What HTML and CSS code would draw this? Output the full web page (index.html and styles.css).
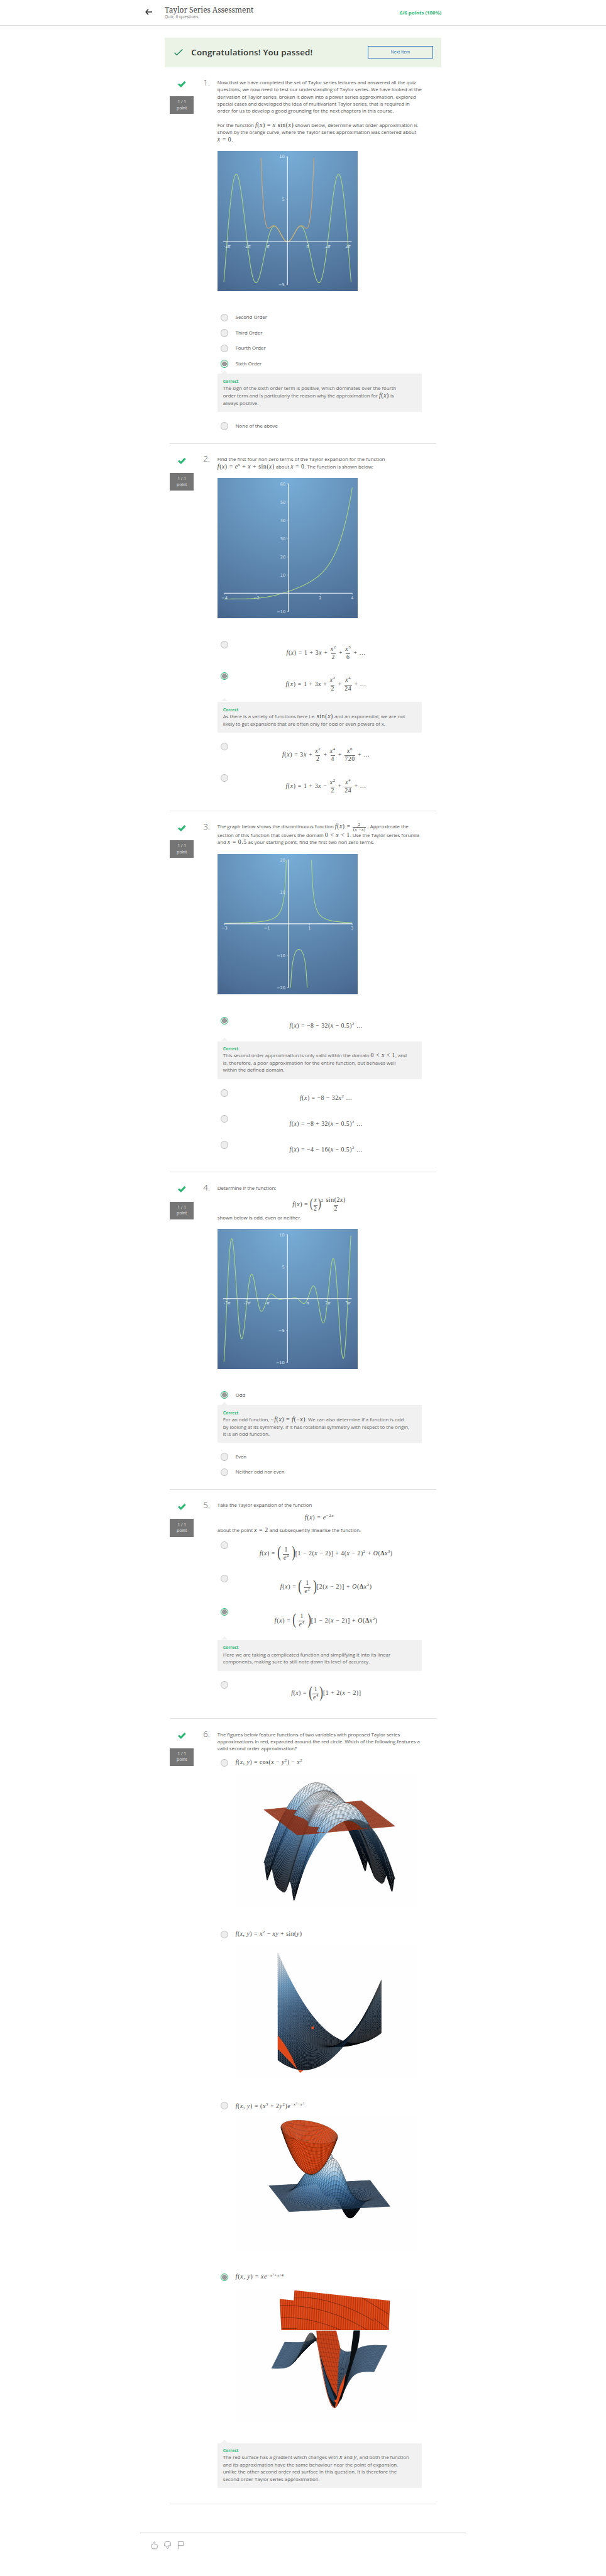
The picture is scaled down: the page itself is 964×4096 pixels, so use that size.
FILE: index.html
```html
<!DOCTYPE html>
<html lang="en">
<head>
<meta charset="utf-8">
<title>Taylor Series Assessment</title>
<link rel="stylesheet" href="styles.css">
</head>
<body>
<svg class="sprite" aria-hidden="true">
  <symbol id="tick" viewBox="0 0 23 18"><path d="M0 9.8 3.6 6.2 8.6 10.4 18.6 0 23 3.4 8.8 18Z"/></symbol>
</svg>

<header class="topbar">
  <div class="topbar__inner">
    <svg class="back" viewBox="0 0 20 18"><path d="M9 1 2 9l7 8M2 9h18"/></svg>
    <div class="topbar__titles">
      <h1>Taylor Series Assessment</h1>
      <p>Quiz, 6 questions</p>
    </div>
    <div class="topbar__score">6/6 points (100%)</div>
  </div>
</header>

<main class="page">
  <section class="banner">
    <svg class="banner__tick" viewBox="0 0 25 18"><path d="M1 10.5 7.5 17 24 .8"/></svg>
    <h2>Congratulations! You passed!</h2>
    <a class="banner__btn">Next Item</a>
  </section>

  <section class="question question--1">
    <div class="side"><svg class="side__tick"><use href="#tick"/></svg><div class="badge">1 / 1<br>point</div></div>
    <div class="num">1.</div>
    <div class="body">
      <div class="prompt">
        <p>Now that we have completed the set of Taylor series lectures and answered all the quiz<br>questions, we now need to test our understanding of Taylor series. We have looked at the<br>derivation of Taylor series, broken it down into a power series approximation, explored<br>special cases and developed the idea of multivariant Taylor series, that is required in<br>order for us to develop a good grounding for the next chapters in this course.</p>
        <p><span class="line line--math">For the function <span class="m"><i>f</i>(<i>x</i>) = <i>x</i> sin(<i>x</i>)</span> shown below, determine what order approximation is</span><span class="line line--math">shown by the orange curve, where the Taylor series approximation was centered about</span><span class="line"><span class="m"><i>x</i> = 0</span>.</span></p>
      </div>
      <svg class="graph" id="graph1" viewBox="0 0 400 400"></svg>
      <div class="options">
        <div class="option"><span class="radio"></span><span class="label">Second Order</span></div>
        <div class="option"><span class="radio"></span><span class="label">Third Order</span></div>
        <div class="option"><span class="radio"></span><span class="label">Fourth Order</span></div>
        <div class="option"><span class="radio radio--on"></span><span class="label">Sixth Order</span></div>
        <div class="feedback"><b>Correct</b><span class="line line--math">The sign of the sixth order term is positive, which dominates over the fourth</span><span class="line line--math">order term and is particularly the reason why the approximation for <span class="m"><i>f</i>(<i>x</i>)</span> is</span><span class="line">always positive.</span></div>
        <div class="option"><span class="radio"></span><span class="label">None of the above</span></div>
      </div>
    </div>
  </section>

  <section class="question question--2">
    <div class="side"><svg class="side__tick"><use href="#tick"/></svg><div class="badge">1 / 1<br>point</div></div>
    <div class="num">2.</div>
    <div class="body">
      <div class="prompt">
        <p><span class="line line--math">Find the first four non zero terms of the Taylor expansion for the function</span><span class="line"><span class="m"><i>f</i>(<i>x</i>) = <i>e</i><sup><i>x</i></sup> + <i>x</i> + sin(<i>x</i>)</span> about <span class="m"><i>x</i> = 0</span>. The function is shown below:</span></p>
      </div>
      <svg class="graph" id="graph2" viewBox="0 0 400 400"></svg>
      <div class="options options--frac">
        <div class="option"><span class="radio"></span><div class="formula"><span class="m"><i>f</i>(<i>x</i>) = 1 + 3<i>x</i> + <span class="frac"><span><i>x</i><sup>2</sup></span><span>2</span></span> + <span class="frac"><span><i>x</i><sup>3</sup></span><span>6</span></span> + …</span></div></div>
        <div class="option"><span class="radio radio--on"></span><div class="formula"><span class="m"><i>f</i>(<i>x</i>) = 1 + 3<i>x</i> + <span class="frac"><span><i>x</i><sup>2</sup></span><span>2</span></span> + <span class="frac"><span><i>x</i><sup>4</sup></span><span>24</span></span> + …</span></div></div>
        <div class="feedback"><b>Correct</b><span class="line line--math">As there is a variety of functions here i.e. <span class="m">sin(<i>x</i>)</span> and an exponential, we are not</span><span class="line">likely to get expansions that are often only for odd or even powers of x.</span></div>
        <div class="option"><span class="radio"></span><div class="formula"><span class="m"><i>f</i>(<i>x</i>) = 3<i>x</i> + <span class="frac"><span><i>x</i><sup>2</sup></span><span>2</span></span> + <span class="frac"><span><i>x</i><sup>4</sup></span><span>4</span></span> + <span class="frac"><span><i>x</i><sup>6</sup></span><span>720</span></span> + …</span></div></div>
        <div class="option"><span class="radio"></span><div class="formula"><span class="m"><i>f</i>(<i>x</i>) = 1 + 3<i>x</i> − <span class="frac"><span><i>x</i><sup>2</sup></span><span>2</span></span> + <span class="frac"><span><i>x</i><sup>4</sup></span><span>24</span></span> + …</span></div></div>
      </div>
    </div>
  </section>

  <section class="question question--3">
    <div class="side"><svg class="side__tick"><use href="#tick"/></svg><div class="badge">1 / 1<br>point</div></div>
    <div class="num">3.</div>
    <div class="body">
      <div class="prompt">
        <p><span class="line line--tall">The graph below shows the discontinuous function <span class="m"><i>f</i>(<i>x</i>) = <span class="frac frac--small"><span>2</span><span>(<i>x</i><sup>2</sup>−<i>x</i>)</span></span></span> . Approximate the</span><span class="line line--math">section of this function that covers the domain <span class="m">0 &lt; <i>x</i> &lt; 1</span>. Use the Taylor series forumla</span><span class="line">and <span class="m"><i>x</i> = 0.5</span> as your starting point, find the first two non zero terms.</span></p>
      </div>
      <svg class="graph" id="graph3" viewBox="0 0 400 400"></svg>
      <div class="options options--line">
        <div class="option"><span class="radio radio--on"></span><div class="formula"><span class="m"><i>f</i>(<i>x</i>) = −8 − 32(<i>x</i> − 0.5)<sup>2</sup> …</span></div></div>
        <div class="feedback"><b>Correct</b><span class="line line--math">This second order approximation is only valid within the domain <span class="m">0 &lt; <i>x</i> &lt; 1</span>, and</span><span class="line">is, therefore, a poor approximation for the entire function, but behaves well</span><span class="line">within the defined domain.</span></div>
        <div class="option"><span class="radio"></span><div class="formula"><span class="m"><i>f</i>(<i>x</i>) = −8 − 32<i>x</i><sup>2</sup> …</span></div></div>
        <div class="option"><span class="radio"></span><div class="formula"><span class="m"><i>f</i>(<i>x</i>) = −8 + 32(<i>x</i> − 0.5)<sup>2</sup> …</span></div></div>
        <div class="option"><span class="radio"></span><div class="formula"><span class="m"><i>f</i>(<i>x</i>) = −4 − 16(<i>x</i> − 0.5)<sup>2</sup> …</span></div></div>
      </div>
    </div>
  </section>

  <section class="question question--4">
    <div class="side"><svg class="side__tick"><use href="#tick"/></svg><div class="badge">1 / 1<br>point</div></div>
    <div class="num">4.</div>
    <div class="body">
      <div class="prompt">
        <p>Determine if the function:</p>
        <div class="display display--tall"><span class="m"><i>f</i>(<i>x</i>) = <span class="paren">(</span><span class="frac"><span><i>x</i></span><span>2</span></span><span class="paren">)</span><sup class="high">2</sup> <span class="frac"><span>sin(2<i>x</i>)</span><span>2</span></span></span></div>
        <p>shown below is odd, even or neither.</p>
      </div>
      <svg class="graph" id="graph4" viewBox="0 0 400 400"></svg>
      <div class="options">
        <div class="option"><span class="radio radio--on"></span><span class="label">Odd</span></div>
        <div class="feedback"><b>Correct</b><span class="line line--math">For an odd function, <span class="m">−<i>f</i>(<i>x</i>) = <i>f</i>(−<i>x</i>)</span>. We can also determine if a function is odd</span><span class="line">by looking at its symmetry. If it has rotational symmetry with respect to the origin,</span><span class="line">it is an odd function.</span></div>
        <div class="option"><span class="radio"></span><span class="label">Even</span></div>
        <div class="option"><span class="radio"></span><span class="label">Neither odd nor even</span></div>
      </div>
    </div>
  </section>

  <section class="question question--5">
    <div class="side"><svg class="side__tick"><use href="#tick"/></svg><div class="badge">1 / 1<br>point</div></div>
    <div class="num">5.</div>
    <div class="body">
      <div class="prompt">
        <p>Take the Taylor expansion of the function</p>
        <div class="display"><span class="m m--wide"><i>f</i>(<i>x</i>) = <i>e</i><sup>−2<i>x</i></sup></span></div>
        <p>about the point <span class="m"><i>x</i> = 2</span> and subsequently linearise the function.</p>
      </div>
      <div class="options options--big">
        <div class="option"><span class="radio"></span><div class="formula"><span class="m"><i>f</i>(<i>x</i>) = <span class="paren paren--l">(</span> <span class="frac"><span>1</span><span><i>e</i><sup>4</sup></span></span> <span class="paren paren--l">)</span>[1 − 2(<i>x</i> − 2)] + 4(<i>x</i> − 2)<sup>2</sup> + <i>O</i>(<b>Δ</b><i>x</i><sup>3</sup>)</span></div></div>
        <div class="option"><span class="radio"></span><div class="formula"><span class="m m--roomy"><i>f</i>(<i>x</i>) = <span class="paren paren--l">(</span> <span class="frac"><span>1</span><span><i>e</i><sup>2</sup></span></span> <span class="paren paren--l">)</span>[2(<i>x</i> − 2)] + <i>O</i>(<b>Δ</b><i>x</i><sup>2</sup>)</span></div></div>
        <div class="option"><span class="radio radio--on"></span><div class="formula"><span class="m m--roomy"><i>f</i>(<i>x</i>) = <span class="paren paren--l">(</span> <span class="frac"><span>1</span><span><i>e</i><sup>4</sup></span></span> <span class="paren paren--l">)</span>[1 − 2(<i>x</i> − 2)] + <i>O</i>(<b>Δ</b><i>x</i><sup>2</sup>)</span></div></div>
        <div class="feedback"><b>Correct</b><span class="line line--math">Here we are taking a complicated function and simplifying it into its linear</span><span class="line">components, making sure to still note down its level of accuracy.</span></div>
        <div class="option"><span class="radio"></span><div class="formula"><span class="m"><i>f</i>(<i>x</i>) = <span class="paren paren--l">(</span><span class="frac"><span>1</span><span><i>e</i><sup>4</sup></span></span><span class="paren paren--l">)</span>[1 + 2(<i>x</i> − 2)]</span></div></div>
      </div>
    </div>
  </section>

  <section class="question question--6">
    <div class="side"><svg class="side__tick"><use href="#tick"/></svg><div class="badge">1 / 1<br>point</div></div>
    <div class="num">6.</div>
    <div class="body">
      <div class="prompt">
        <p>The figures below feature functions of two variables with proposed Taylor series<br>approximations in red, expanded around the red circle. Which of the following features a<br>valid second order approximation?</p>
      </div>
      <div class="options options--fig">
        <div class="option"><span class="radio"></span><div class="pick"><div class="formula"><span class="m"><i>f</i>(<i>x</i>, <i>y</i>) = cos(<i>x</i> − <i>y</i><sup>2</sup>) − <i>x</i><sup>2</sup></span></div><svg class="figure" id="fig1" viewBox="0 0 518 380"></svg></div></div>
        <div class="option"><span class="radio"></span><div class="pick"><div class="formula"><span class="m"><i>f</i>(<i>x</i>, <i>y</i>) = <i>x</i><sup>2</sup> − <i>xy</i> + sin(<i>y</i>)</span></div><svg class="figure" id="fig2" viewBox="0 0 518 380"></svg></div></div>
        <div class="option"><span class="radio"></span><div class="pick"><div class="formula formula--low"><span class="m m--third"><i>f</i>(<i>x</i>, <i>y</i>) = (<i>x</i><sup>3</sup> + 2<i>y</i><sup>2</sup>)<i>e</i><sup>−<i>x</i><sup>2</sup>−<i>y</i><sup>2</sup></sup></span></div><svg class="figure" id="fig3" viewBox="0 0 518 380"></svg></div></div>
        <div class="option"><span class="radio radio--on"></span><div class="pick"><div class="formula"><span class="m m--wide"><i>f</i>(<i>x</i>, <i>y</i>) = <i>xe</i><sup>−<i>x</i><sup>2</sup>+<i>y</i>/4</sup></span></div><svg class="figure" id="fig4" viewBox="0 0 518 380"></svg></div></div>
        <div class="feedback"><b>Correct</b><span class="line line--math">The red surface has a gradient which changes with <span class="m"><i>x</i></span> and <span class="m"><i>y</i></span>, and both the function</span><span class="line">and its approximation have the same behaviour near the point of expansion,</span><span class="line">unlike the other second order red surface in this question. It is therefore the</span><span class="line">second order Taylor series approximation.</span></div>
      </div>
    </div>
  </section>
</main>

<footer class="footer">
  <svg viewBox="0 0 20 22"><path d="M1 9.5h3.500L10 1.200l2 1.300-1 7h7l1.300 2-1.500 8-1.800 1.700H5l-3-3Z"/></svg>
  <svg viewBox="0 0 20 22"><path d="M1 12.500h3.500L10 20.800l2-1.300-1-7h7l1.300-2-1.500-8L16 .8H5l-3 3Z"/></svg>
  <svg viewBox="0 0 20 22"><path d="M2.500 22V1h15v11h-15"/></svg>
</footer>
<script src="plots.js"></script>
</body>
</html>
```
FILE: styles.css
```css
/* 1rem is ten layout units */
html { font-size: 5.5722px; }
* { box-sizing: border-box; margin: 0; padding: 0; }
body { background: #fff; color: #525252; font-family: "Open Sans", "Noto Sans", sans-serif; font-size: 1.4rem; line-height: 2rem; height: 735rem; overflow-x: hidden; }
.sprite { display: none; }

.topbar { height: 7.4rem; border-bottom: .2rem solid #ddd; }
.topbar__inner { width: 93rem; margin: 0 auto; padding: 0 7rem 0 1.4rem; display: flex; align-items: flex-start; }
.back { width: 2rem; height: 1.8rem; margin-top: 2.6rem; fill: none; stroke: #333; stroke-width: 2.6; }
.topbar__titles { margin-left: 3.6rem; flex: 1; }
.topbar h1 { width: max-content; font: 400 2.15rem/2.8rem "Noto Serif", "Liberation Serif", serif; margin-top: 1.35rem; color: #444; letter-spacing: -.012rem; }
.topbar p { width: max-content; font-size: 1.2rem; line-height: 1.8rem; margin-top: -.2rem; color: #757575; }
.topbar__score { margin-top: 2.7rem; font-weight: 700; color: #2ab673; }

.page { width: 79rem; margin: 0 auto; }
.banner { margin-top: 3.4rem; height: 8.37rem; background: #eaf3e6; display: flex; align-items: center; padding: 0 2.4rem 0 2.7rem; }
.banner__tick { width: 2.5rem; height: 1.8rem; fill: none; stroke: #1f8a5b; stroke-width: 2.5; }
.banner h2 { margin-left: 2.4rem; font-size: 2.4rem; line-height: 3rem; font-weight: 600; color: #333; letter-spacing: .038rem; }
.banner__btn { margin-left: auto; width: 18.6rem; height: 3.6rem; border: .18rem solid #2a6cc0; color: #2a6cc0; font-size: 1.2rem; line-height: 3.3rem; text-align: center; }

.question { width: 76rem; margin: 0 auto; border-bottom: .2rem solid #e0e0e0; display: grid; grid-template-columns: 9.5rem 4.07rem 1fr; }
.question--1 { height: 107.46rem; }
.question--2 { height: 104.83rem; }
.question--3 { height: 103.14rem; }
.question--4 { height: 90.55rem; }
.question--5 { height: 65.38rem; }
.question--6 { height: 224.1rem; }
.side { width: 6.8rem; padding-top: 3.95rem; }
.side__tick { display: block; width: 2.3rem; height: 1.8rem; margin: 0 auto 2.6rem; fill: #2ab673; }
.badge { height: 5.05rem; padding-top: .74rem; background: #757575; color: #e8e8e8; font-size: 1.2rem; line-height: 1.7rem; text-align: center; }
.num { padding-top: 3.2rem; font-size: 2.4rem; line-height: 2.4rem; font-weight: 300; }
.body { padding-top: 3.5rem; white-space: nowrap; }
.prompt p + p { margin-top: 2.07rem; }
.question--1 .prompt { height: 20.48rem; }
.question--2 .prompt { height: 6.3rem; }
.question--3 .prompt { height: 8.84rem; }
.question--4 .prompt { height: 12.53rem; }
.question--5 .prompt { height: 10.07rem; }
.question--6 .prompt { height: 6.83rem; }
.line { display: block; height: 2rem; line-height: 2rem; }
.line--math { height: 2.12rem; }
.line--tall { height: 2.4rem; }

.graph { display: block; width: 40rem; height: 40rem; margin-bottom: 5.3rem; background: radial-gradient(circle at 50% 0, #78aed8 0%, #6490b8 45%, #4e7098 89%, #46638b 100%); }
.graph text { font: 12px "DejaVu Sans", sans-serif; fill: #dbe6f0; }
.graph tspan { font-style: italic; }
.axis { stroke: #f4f8fb; stroke-width: 2; fill: none; }
.tickmark { stroke: #f4f8fb; stroke-width: 1; fill: none; }
.curve { stroke: #a9d67f; stroke-width: 1.9; fill: none; }
.curve--orange { stroke: #d8a86c; }

.option { display: flex; align-items: flex-start; height: 4.4rem; }
.options--frac .option { height: 8.97rem; }
.options--line .option { height: 7.4rem; }
.options--big .option { height: 9.56rem; }
.options--fig .option { height: 48.92rem; }
.radio { flex: none; width: 2.2rem; height: 2.2rem; margin: 1.1rem 2.05rem 0 .94rem; border: .15rem solid #bdbdbd; border-radius: 50%; background: #eee; }
.radio--on { border: .2rem solid #2ab673; background: radial-gradient(circle closest-side, #999 0 74%, #eee 80%); }
.label { padding-top: 1.15rem; }
.formula { width: 51.7rem; height: 2rem; margin-top: 3.67rem; text-align: center; }
.options--line .formula { margin-top: 2.67rem; }
.options--fig .formula { margin-top: 1.2rem; text-align: left; }
.options--fig .formula--low { margin-top: 1.4rem; margin-bottom: -.2rem; }
.feedback { position: relative; width: 58.4rem; margin: .63rem 0 1.82rem; padding: 1.17rem 1.6rem 1.46rem; background: #f1f1f1; color: #666; }
.feedback::before { content: ""; position: absolute; left: 1.1rem; top: -1rem; border: .97rem solid transparent; border-top: 0; border-bottom: 1rem solid #f1f1f1; }
.feedback b { display: block; font-size: 1.2rem; color: #2ab673; font-weight: 700; height: 2.03rem; }

.m { font-family: "Liberation Serif", serif; font-size: 1.75rem; line-height: 0; letter-spacing: .1rem; color: #444; }
.options--frac .m { letter-spacing: .115rem; }
.options--line .m { letter-spacing: .09rem; }
.options--fig .m { letter-spacing: .09rem; }
.options--fig .m--third { letter-spacing: .11rem; }
.m.m--wide { letter-spacing: .128rem; }
.m.m--roomy { letter-spacing: .12rem; }
.m b { display: inline; height: auto; font-size: inherit; color: inherit; }
.m sup { font-size: 70%; line-height: 0; vertical-align: .65rem; }
.m sup sup { vertical-align: .4rem; }
.m sup.high { vertical-align: 1.3rem; }
.frac { display: inline-flex; flex-direction: column; align-items: center; vertical-align: middle; margin: -3rem .1rem; line-height: 1.8rem; }
.frac > span { display: block; height: 2.2rem; padding: 0 .1rem; }
.frac > span + span { border-top: .12rem solid #666; }
.frac--small { font-size: 1.2rem; line-height: 1.2rem; }
.frac--small > span { height: 1.3rem; }
.paren { display: inline-block; font-size: 3.6rem; line-height: 0; vertical-align: -.45rem; transform: scaleX(.7); margin: 0 -.15rem; letter-spacing: 0; }
.paren--l { font-size: 4.4rem; vertical-align: -.62rem; margin: 0 -.2rem; }
.display { height: 2rem; margin-top: 1.5rem; text-align: center; width: 58.2rem; }
.display + p { margin-top: 1.6rem; }
.display--tall { margin-top: 2.45rem; }
.display--tall + p { margin-top: 2.06rem; }

.figure { display: block; width: 51.8rem; height: 38rem; margin-top: 2.24rem; background: #fefefe; }

.footer { width: 93rem; height: 10rem; margin: 8.07rem auto 0; border-top: .18rem solid #cfcfcf; padding: 2.3rem 3.1rem; display: flex; gap: 1.8rem; }
.footer svg { width: 2rem; height: 2.2rem; fill: none; stroke: #7d7d85; stroke-width: 1.3; overflow: visible; }
```
FILE: plots.js
```js
const PI = Math.PI;
const get = id => document.getElementById(id);

/* ---------- line graphs ---------- */
function curve(g, fn, from, to, cls) {
  let d = '', pen = false;
  for (let i = 0; i <= 800; i++) {
    const x = from + (to - from) * i / 800, y = fn(x);
    if (!isFinite(y) || y > g.max || y < g.min) { pen = false; continue; }
    d += (pen ? 'L' : 'M') + (g.ox + x * g.sx).toFixed(2) + ' ' + (g.oy - y * g.sy).toFixed(2);
    pen = true;
  }
  return `<path class="curve ${cls || ''}" d="${d}"/>`;
}
function graph(id, g) {
  let s = g.curves.map(c => curve(g, c[0], c[1], c[2], c[3])).join('');
  s += `<path class="axis" d="M${g.left} ${g.oy}H${g.right}M${g.ox} 15.5V382"/>`;
  let ticks = '';
  g.yt.forEach(v => {
    const y = g.oy - v * g.sy;
    ticks += `M${g.ox - 3} ${y}H${g.ox}`;
    s += `<text x="${g.ox - 8}" y="${y + 4.5}" text-anchor="end">${String(v).replace('-', '−')}</text>`;
  });
  g.xt.forEach(([v, label]) => {
    const x = g.ox + v * g.sx;
    ticks += `M${x} ${g.oy}v4`;
    s += `<text x="${x}" y="${g.oy + 17}" text-anchor="middle">${label}</text>`;
  });
  get(id).innerHTML = s + `<path class="tickmark" d="${ticks}"/>`;
}
const pis = [-3, -2, -1, 1, 2, 3].map(k => [k * PI,
  (k < 0 ? '-' : '') + (Math.abs(k) > 1 ? Math.abs(k) : '') + '<tspan>π</tspan>']);
graph('graph1', { ox: 199.7, oy: 259, sx: 57.5 / PI, sy: 24.35, max: 10, min: -5.1, left: 15.8, right: 383,
  yt: [10, 5, -5], xt: pis, curves: [[x => x * Math.sin(x), -9.92, 9.92],
  [x => x * x - x ** 4 / 6 + x ** 6 / 120, -5, 5, 'curve--orange']] });
graph('graph2', { ox: 202.2, oy: 329, sx: 45.6, sy: 5.21, max: 60, min: -10, left: 19, right: 385,
  yt: [60, 50, 40, 30, 20, 10, -10], xt: [[-4, '−4'], [-2, '−2'], [2, '2'], [4, '4']],
  curves: [[x => Math.exp(x) + x + Math.sin(x), -4, 4]] });
const pole = x => 2 / (x * x - x);
graph('graph3', { ox: 202, oy: 199, sx: 60.8, sy: 9.12, max: 20, min: -20, left: 19, right: 385,
  yt: [20, 10, -10, -20], xt: [[-3, '−3'], [-1, '−1'], [1, '1'], [3, '3']],
  curves: [[pole, -3, -0.01], [pole, 0.01, 0.99], [pole, 1.01, 3]] });
graph('graph4', { ox: 199.7, oy: 199, sx: 57.5 / PI, sy: 18.2, max: 10, min: -10, left: 15.8, right: 383,
  yt: [10, 5, -5, -10], xt: pis, curves: [[x => x * x / 8 * Math.sin(2 * x), -9.92, 9.92]] });

/* ---------- surfaces ---------- */
const COT = 3.68, TAN = 0.272;
const STOPS = [[0, 5, 8, 12], [0.3, 34, 58, 84], [0.5, 61, 104, 148], [0.7, 112, 170, 216], [0.85, 200, 225, 243], [1, 255, 255, 255]];
function shade(t, k) {
  t = Math.max(0, Math.min(1, t));
  let i = 1;
  while (i < STOPS.length - 1 && STOPS[i][0] < t) i++;
  const a = STOPS[i - 1], b = STOPS[i], u = (t - a[0]) / (b[0] - a[0]);
  return 'rgb(' + [1, 2, 3].map(c => Math.round((a[c] + (b[c] - a[c]) * u) * k)).join() + ')';
}
/* v: view {cx, cy, X, Y, z, half, base}; the underside is painted darker */
function mesh(v, fn, n, paint) {
  const quads = [];
  const at = (i, j) => {
    const a = -1 + 2 * i / n, b = -1 + 2 * j / n, z = fn(a * v.half, b * v.half);
    const gy = a * v.X[1] + b * v.Y[1], h = (z - v.base) * v.z;
    return { x: v.cx + a * v.X[0] + b * v.Y[0], y: v.cy + gy - h, z, near: gy * COT + h * TAN };
  };
  const pts = [];
  for (let i = 0; i <= n; i++) { pts.push([]); for (let j = 0; j <= n; j++) pts[i].push(at(i, j)); }
  for (let i = 0; i < n; i++) for (let j = 0; j < n; j++) {
    const q = [pts[i][j], pts[i + 1][j], pts[i + 1][j + 1], pts[i][j + 1]];
    const area = (q[2].x - q[0].x) * (q[3].y - q[1].y) - (q[3].x - q[1].x) * (q[2].y - q[0].y);
    quads.push({ near: q.reduce((s, p) => s + p.near, 0) / 4,
      d: 'M' + q.map(p => p.x.toFixed(2) + ' ' + p.y.toFixed(2)).join('L') + 'Z',
      fill: paint(q.reduce((s, p) => s + p.z, 0) / 4, area > 0) });
  }
  return quads;
}
const draw = (quads, width, op) => `<g stroke="#000" stroke-opacity="${op}" stroke-width="${width}">` +
  quads.sort((a, b) => a.near - b.near).map(q => `<path fill="${q.fill}" d="${q.d}"/>`).join('') + '</g>';
const blue = (lo, hi) => (z, back) => shade((z - lo) / (hi - lo), back ? 0.4 : 1);

const v1 = { cx: 267.6, cy: 125, X: [-139.8, 12.7], Y: [48, 36.5], z: 22.4, half: PI, base: -2.2 };
get('fig1').innerHTML = draw(mesh(v1, (x, y) => Math.cos(x - y * y) - x * x, 70, blue(-10.9, 1))
  .concat(mesh(v1, () => -2.2, 70, () => '#d9451a')), 0.45, 0.5);

const v2 = { cx: 267.9, cy: 287.5, X: [-147.8, 0], Y: [0, 38.5], z: 11.6, half: PI, base: 0 };
get('fig2').innerHTML = draw(mesh(v2, (x, y) => x * x - x * y + Math.sin(y), 60, blue(-4, 20)), 0.5, 0.5) +
  `<g transform="translate(-213 248.8) scale(.5102 .7015)" fill="#e04a1a"><path d="M653 10 690 45 730 95 762 148 700 100 653 65ZM765 150 778 162 796 152Z"/></g>
  <circle cx="219.7" cy="234" r="4" fill="#e8501c"/>`;

const v3 = { cx: 267.6, cy: 225.8, X: [-144.6, 7.7], Y: [28.8, 37.5], z: 162, half: 3, base: 0 };
const bowl = [];
const B = 34, bowlAt = (u, w) => {
  const a = u * Math.sqrt(1 - w * w / 2), b = w * Math.sqrt(1 - u * u / 2), r2 = a * a + b * b;
  return [(829 + a * 156 - b * 30) / 1.96 - 213, (404 + a * 11 - b * 47 + (1 - r2) * 169) * 0.7015 - 240.4, b];
};
for (let i = 0; i < B; i++) for (let j = 0; j < B; j++) {
  const c = [[i, j], [i + 1, j], [i + 1, j + 1], [i, j + 1]].map(([p, q]) => bowlAt(2 * p / B - 1, 2 * q / B - 1));
  bowl.push({ near: -c[0][2], fill: '#e54a18', d: 'M' + c.map(p => p[0].toFixed(2) + ' ' + p[1].toFixed(2)).join('L') + 'Z' });
}
get('fig3').innerHTML = draw(mesh(v3, (x, y) => (x ** 3 + 2 * y * y) * Math.exp(-x * x - y * y), 64, blue(-0.41, 0.736)), 0.45, 0.45) + draw(bowl, 0.5, 0.6);

const v4 = { cx: 267.4, cy: 195, X: [-146.5, -4.9], Y: [-19, 37.9], z: 113, half: PI, base: 0 };
let slats = '';
for (let x = 655; x < 1290; x += 10) slats += `M${x} 1040l8 175`;
get('fig4').innerHTML = draw(mesh(v4, (x, y) => x * Math.exp(-x * x + y / 4), 70, blue(-1.1, 1)), 0.45, 0.5) +
  `<g transform="translate(-213 -729.6) scale(.5102 .7015)">
    <clipPath id="slab"><path d="M746 1047 1281 1089 1274 1209 673 1209 663 1082 742 1088Z"/></clipPath>
    <clipPath id="lobe"><path d="M868 1210H980L1003 1283 992 1350 984 1478 960 1450 925 1390 890 1310 872 1245Z"/></clipPath>
    <path fill="#0c0f12" d="M1077 1210H1113C1110 1250 1100 1285 1086 1310L1050 1395 1010 1490 985 1510 1030 1400 1055 1335Z"/>
    <path fill="#101820" d="M872 1245 890 1310 925 1390 960 1450 984 1478 975 1526C945 1515 925 1460 905 1375Z"/>
    <path fill="#27425c" d="M893 1325 925 1400 972 1490 968 1505 940 1480 910 1400Z"/>
    <path fill="#e04a1a" d="M1033 1385 1020 1440 985 1515 972 1526 978 1500 1000 1440Z"/>
    <g clip-path="url(#lobe)"><path fill="#c9431a" d="M860 1200h150v290h-150z"/>
      <path stroke="#000" stroke-opacity=".5" fill="none" d="${Array.from({ length: 16 }, (_, k) => `M${800 + k * 14} 1200q30 170 120 290M860 ${1205 + k * 18}l150 12`).join('')}"/></g>
    <g clip-path="url(#slab)"><path fill="#e54a18" d="M660 1040h630v175h-630z"/>
      <path stroke="#000" stroke-opacity=".6" stroke-width="1.3" fill="none" d="${slats}"/>
      <path stroke="#3a1408" stroke-width="1.5" fill="none" d="M745 1075C900 1070 1080 1120 1190 1172M665 1109C800 1105 980 1130 1155 1209M670 1158C780 1155 900 1175 1005 1209M1120 1076 1276 1145M1190 1162 1274 1204M673 1202H760"/></g>
    <path fill="none" stroke="#e04a1a" stroke-width="3" d="M870 1240C890 1330 905 1400 930 1470 945 1505 960 1522 972 1526"/>
    <path fill="#e8501c" d="M970 1492h16l4 4-6 6h-12z"/>
  </g>`;
```
